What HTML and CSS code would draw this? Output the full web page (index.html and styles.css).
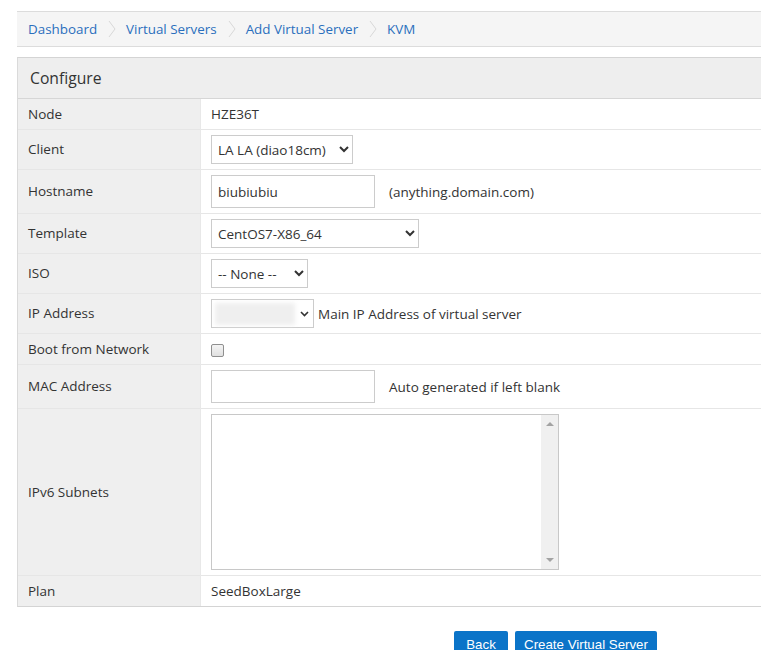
FILE: index.html
```html
<!DOCTYPE html>
<html>
<head>
<meta charset="utf-8">
<link rel="stylesheet" href="styles.css">
</head>
<body>
<div class="page">
  <nav class="crumbs">
    <a href="#">Dashboard</a>
    <svg class="sep" width="8" height="18" viewBox="0 0 8 18"><polyline points="1,1 7,9 1,17" fill="none" stroke="#d8d8d8" stroke-width="1"/></svg>
    <a href="#">Virtual Servers</a>
    <svg class="sep" width="8" height="18" viewBox="0 0 8 18"><polyline points="1,1 7,9 1,17" fill="none" stroke="#d8d8d8" stroke-width="1"/></svg>
    <a href="#">Add Virtual Server</a>
    <svg class="sep" width="8" height="18" viewBox="0 0 8 18"><polyline points="1,1 7,9 1,17" fill="none" stroke="#d8d8d8" stroke-width="1"/></svg>
    <span class="current">KVM</span>
  </nav>

  <section class="panel">
    <div class="panel-head">Configure</div>
    <table class="form">
      <tr class="r-text"><th>Node</th><td>HZE36T</td></tr>
      <tr class="r-ctl"><th>Client</th><td><select class="sel sel-client"><option>LA LA (diao18cm)</option></select></td></tr>
      <tr class="r-input"><th>Hostname</th><td><input class="inp" type="text" value="biubiubiu"><span class="hint">(anything.domain.com)</span></td></tr>
      <tr class="r-ctl"><th>Template</th><td><select class="sel sel-tpl"><option>CentOS7-X86_64</option></select></td></tr>
      <tr class="r-ctl"><th>ISO</th><td><select class="sel sel-iso"><option>-- None --</option></select></td></tr>
      <tr class="r-ctl"><th>IP Address</th><td><div class="fakesel"><span class="blur"></span><svg class="chev" width="9" height="6" viewBox="0 0 9 6"><polyline points="1,1 4.5,4.5 8,1" fill="none" stroke="#333" stroke-width="1.6"/></svg></div><span class="hint hint-ip">Main IP Address of virtual server</span></td></tr>
      <tr class="r-text"><th>Boot from Network</th><td><span class="cb"></span></td></tr>
      <tr class="r-input"><th>MAC Address</th><td><input class="inp" type="text" value=""><span class="hint">Auto generated if left blank</span></td></tr>
      <tr class="r-area"><th>IPv6 Subnets</th><td><div class="area"><textarea class="area-text"></textarea><div class="sbar"><span class="tri up"></span><span class="tri down"></span></div></div></td></tr>
      <tr class="r-text"><th>Plan</th><td>SeedBoxLarge</td></tr>
    </table>
  </section>

  <div class="actions">
    <button class="btn btn-back">Back</button>
    <button class="btn btn-create">Create Virtual Server</button>
  </div>
</div>
</body>
</html>
```

FILE: styles.css
```css
html, body {
  margin: 0;
  padding: 0;
  background: #fff;
}
body {
  font-family: "Open Sans", "Noto Sans", sans-serif;
  font-size: 13.5px;
  color: #333;
  overflow: hidden;
}
.page {
  width: 744px;
  padding: 11px 0 0 17px;
}
.crumbs {
  display: flex;
  align-items: center;
  height: 34px;
  background: #f5f5f5;
  border-top: 1px solid #dcdcdc;
  border-bottom: 1px solid #dcdcdc;
  padding-left: 11px;
}
.crumbs a, .crumbs .current {
  color: #2a6fbd;
  text-decoration: none;
  font-size: 13.4px;
  line-height: 20px;
}
.crumbs .sep {
  margin: 0 10px 0 11px;
}
.panel {
  margin-top: 10px;
  border-top: 1px solid #d4d4d4;
  border-bottom: 1px solid #d4d4d4;
  border-left: 1px solid #dadada;
}
.panel-head {
  height: 41px;
  line-height: 40px;
  background: #eeeeee;
  border-bottom: 1px solid #d6d6d6;
  padding-left: 12px;
  font-size: 15.7px;
  color: #333;
  box-sizing: border-box;
}
.form {
  width: 100%;
  border-collapse: collapse;
}
.form th, .form td {
  text-align: left;
  font-weight: normal;
  padding: 5px 10px;
  line-height: 20px;
  vertical-align: middle;
  border-top: 1px solid #e6e6e6;
}
.form tr:first-child th, .form tr:first-child td { border-top: 0; }
.form th {
  width: 162px;
  background: #efefef;
  border-right: 1px solid #e8e8e8;
  padding-left: 10px;
}
.form td {
  white-space: nowrap;
}
.r-text td, .r-text th { height: 20px; }
.r-ctl td, .r-ctl th { height: 29px; }
.r-input td, .r-input th { height: 33px; }
.r-area td, .r-area th { height: 156px; }
.r-ctl th, .r-input th {
  padding-top: 4px;
  padding-bottom: 6px;
}
.sel {
  height: 29px;
  border: 1px solid #cccccc;
  border-radius: 0;
  background: #fff;
  font-family: inherit;
  font-size: 13.5px;
  color: #333;
  padding: 0 2px;
  vertical-align: middle;
  margin: 0;
}
.sel-client { width: 142px; }
.sel-tpl { width: 208px; }
.sel-iso { width: 97px; }
.inp {
  width: 164px;
  height: 33px;
  box-sizing: border-box;
  border: 1px solid #cccccc;
  border-radius: 0;
  padding: 0 6px;
  font-family: inherit;
  font-size: 13.5px;
  color: #333;
  vertical-align: middle;
  margin: 0;
}
.hint {
  margin-left: 14px;
  vertical-align: middle;
}
.hint-ip { margin-left: 4px; }
.fakesel {
  display: inline-flex;
  align-items: center;
  width: 103px;
  height: 29px;
  box-sizing: border-box;
  border: 1px solid #cccccc;
  background: #fff;
  vertical-align: middle;
  padding-left: 3px;
}
.blur {
  width: 80px;
  height: 22px;
  background: #efefef;
  filter: blur(2px);
}
.chev { margin-left: 5px; }
.cb {
  display: inline-block;
  width: 11px;
  height: 11px;
  border: 1px solid #8f8f8f;
  border-radius: 2px;
  background: linear-gradient(#f4f4f4, #e0e0e0);
  vertical-align: middle;
}
.area {
  display: flex;
  width: 348px;
  height: 156px;
  box-sizing: border-box;
  border: 1px solid #c8c8c8;
  background: #fff;
}
.area-text {
  flex: 1;
  border: 0;
  margin: 0;
  padding: 0;
  resize: none;
  outline: none;
  background: #fff;
}
.sbar {
  width: 17px;
  background: #f0f0f0;
  display: flex;
  flex-direction: column;
  justify-content: space-between;
  align-items: center;
  padding: 7px 0 7px;
}
.tri {
  width: 0;
  height: 0;
  border-left: 4px solid transparent;
  border-right: 4px solid transparent;
}
.tri.up { border-bottom: 4px solid #a3a3a3; }
.tri.down { border-top: 4px solid #a3a3a3; }
.actions {
  display: flex;
  gap: 7px;
  padding: 24px 0 0 437px;
}
.btn {
  background: #0b74c8;
  color: #fff;
  border: 0;
  border-radius: 2px 2px 0 0;
  font-family: "Liberation Sans", Arial, sans-serif;
  font-size: 13.3px;
  height: 32px;
  padding: 0 0 5px;
  line-height: 20px;
  margin: 0;
  display: block;
  text-align: center;
  box-sizing: border-box;
  align-self: flex-start;
}
.btn-back { width: 54px; }
.btn-create { width: 142px; }
```
